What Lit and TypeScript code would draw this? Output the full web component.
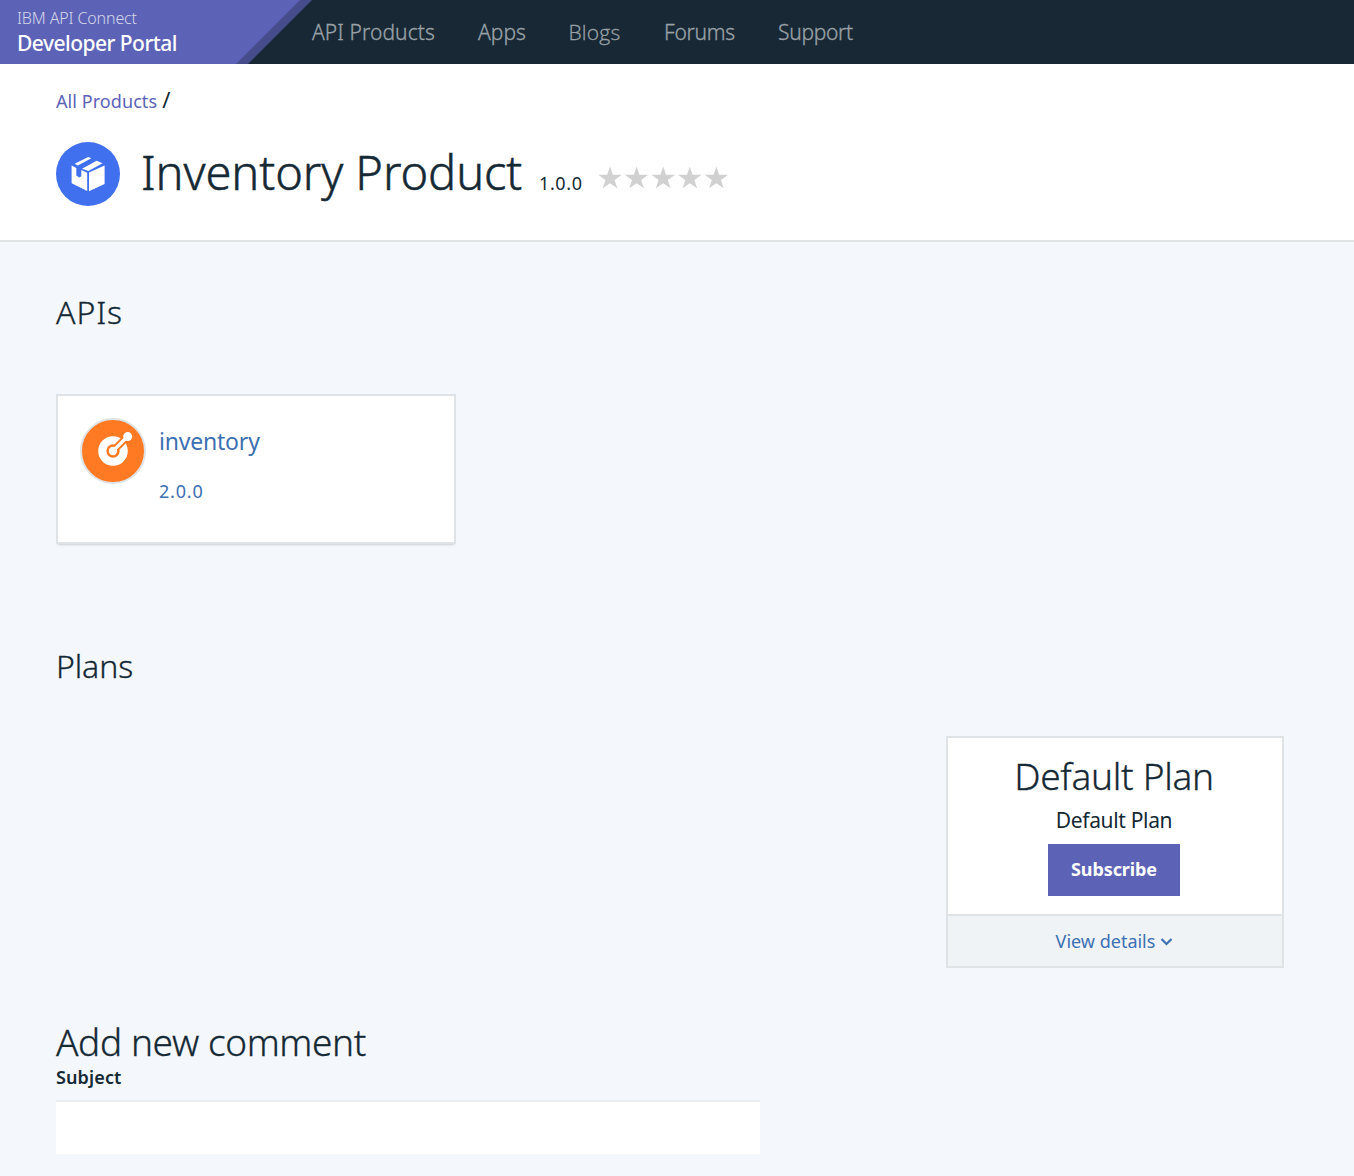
import { LitElement, html, css, svg } from "lit";
import { customElement } from "lit/decorators.js";

const NAV = [
  { label: "API Products", cls: "products" },
  { label: "Apps", cls: "apps" },
  { label: "Blogs", cls: "blogs" },
  { label: "Forums", cls: "forums" },
  { label: "Support", cls: "support" },
];

@customElement("portal-header")
class PortalHeader extends LitElement {
  static styles = css`
    :host { display: block; }
    .bar {
      display: grid; grid-template-columns: 312px 1fr; height: 64px;
      background: #182935; font-family: "Noto Sans", sans-serif;
    }
    .edge { background: #474d8c; clip-path: polygon(0 0, 312px 0, 248px 64px, 0 64px); }
    .brand {
      box-sizing: border-box; height: 64px; padding: 7px 0 0 17px; color: #fff;
      background: #5c63b6; clip-path: polygon(0 0, 300px 0, 236px 64px, 0 64px);
      white-space: nowrap;
    }
    .vendor { font-size: 16px; line-height: 22px; font-weight: 300; letter-spacing: -0.13px; color: #d4d6ec; }
    .name { font-size: 21px; line-height: 28px; font-weight: 500; letter-spacing: -0.52px; }
    .nav {
      display: flex; color: #9aa2a8; font-size: 21px; line-height: 65px; font-weight: 300; white-space: nowrap;
      -webkit-text-stroke: 0.3px #9aa2a8;
    }
    .item { flex: none; }
    .products { width: 166px; letter-spacing: 0.1px; }
    .apps { width: 90.5px; letter-spacing: 0.05px; }
    .blogs { width: 95.5px; font-family: "Open Sans", sans-serif; letter-spacing: 0.2px; }
    .forums { width: 114px; letter-spacing: -0.25px; }
    .support { letter-spacing: -0.3px; }
  `;
  render() {
    return html`<div class="bar">
      <div class="edge"><div class="brand">
        <div class="vendor">IBM API Connect</div>
        <div class="name">Developer Portal</div>
      </div></div>
      <nav class="nav">${NAV.map((n) => html`<span class="item ${n.cls}">${n.label}</span>`)}</nav>
    </div>`;
  }
}

@customElement("product-banner")
class ProductBanner extends LitElement {
  static styles = css`
    :host { display: block; }
    .banner {
      box-sizing: border-box; height: 178px; padding: 24px 56px 0; background: #fff;
      border-bottom: 2px solid #dfe3e6; color: #152935; font-family: "Noto Sans", sans-serif;
    }
    .crumbs { display: flex; gap: 5px; height: 26px; line-height: 26px; }
    .link { color: #5c63b6; font-size: 18px; letter-spacing: 0.07px; }
    .slash { font-size: 22px; line-height: 23px; }
    .row { display: flex; align-items: flex-start; margin-top: 28px; white-space: nowrap; }
    .title {
      margin: 0 0 0 21px; width: 398px; font-size: 47px; line-height: 60px; font-weight: 300;
      letter-spacing: -0.08px; -webkit-text-stroke: 0.5px #152935;
    }
    .version { width: 59px; padding-top: 21px; font-size: 18px; line-height: 40px; letter-spacing: 0.6px; }
    .stars { margin-top: 24px; }
    svg { display: block; }
  `;
  render() {
    return html`<div class="banner">
      <div class="crumbs"><span class="link">All Products</span><span class="slash">/</span></div>
      <div class="row">
        <svg width="64" height="64" viewBox="0 0 64 64">
          <circle cx="32" cy="32" r="32" fill="#4070ed" />
          <path fill="#fff" d="M18.6 21.8 32.2 15l3.2 1.3-13.6 7.3zM26 26.8l14.6-8 6 2.4-14.2 7.7zM15.6 23.6l4.7 2.3v7.7l3 1.9 2-1.3v-6.1l5.9 2.7v18.3l-15.6-7.8zM33 30.5l15.6-6.9V42L33 49.3z" />
        </svg>
        <h1 class="title">Inventory Product</h1>
        <span class="version">1.0.0</span>
        <svg class="stars" width="132" height="24" viewBox="0 0 132 24">
          ${[0, 1, 2, 3, 4].map((i) => svg`<path fill="#d1d1d1" transform="translate(${i * 26.6} 0)"
            d="M12 .5l2.8 8.2h9l-7.2 5.3 2.7 8.2-7.3-5-7.3 5L7.4 14 .2 8.7h9z" />`)}
        </svg>
      </div>
    </div>`;
  }
}

@customElement("api-card")
class ApiCard extends LitElement {
  static styles = css`
    :host { display: block; }
    .card {
      box-sizing: border-box; display: flex; gap: 13px; width: 400px; height: 150px; padding: 22px;
      background: #fff; border: 2px solid #dfe3e6; box-shadow: 0 3px 2px -2px rgba(0, 0, 0, 0.16);
      color: #3d70b2; font-family: "Noto Sans", sans-serif;
    }
    svg { display: block; flex: none; }
    .text { padding-top: 8px; }
    .name { font-size: 23px; line-height: 30px; letter-spacing: -0.2px; }
    .version { margin-top: 22px; font-size: 18px; line-height: 26px; letter-spacing: 0.8px; }
  `;
  render() {
    return html`<div class="card">
      <svg width="66" height="66" viewBox="0 0 66 66">
        <circle cx="33" cy="33" r="32" fill="#ff7a23" stroke="#dfe3e6" stroke-width="2" />
        <circle cx="33" cy="33" r="14.8" fill="#fff" />
        <path d="M33 33 49 17" stroke="#ff7a23" stroke-width="7.4" />
        <circle cx="33" cy="33" r="6.7" fill="#ff7a23" />
        <path d="M33 33 47 19" stroke="#fff" stroke-width="3.2" />
        <circle cx="33" cy="33" r="4.2" fill="#fff" />
        <circle cx="47.7" cy="18.6" r="4.5" fill="#fff" />
      </svg>
      <div class="text"><div class="name">inventory</div><div class="version">2.0.0</div></div>
    </div>`;
  }
}

@customElement("plan-card")
class PlanCard extends LitElement {
  static styles = css`
    :host { display: block; }
    .card {
      box-sizing: border-box; width: 338px; height: 232px; background: #fff; border: 2px solid #dfe3e6;
      color: #152935; font-family: "Noto Sans", sans-serif; white-space: nowrap;
    }
    .body {
      box-sizing: border-box; height: 178px; padding: 13px 2px 0 0; display: flex; flex-direction: column;
      align-items: center; border-bottom: 2px solid #dfe3e6;
    }
    .title {
      font-size: 37px; line-height: 50px; font-weight: 300; letter-spacing: -0.3px;
      -webkit-text-stroke: 0.3px #152935;
    }
    .about { margin-top: 4px; font-size: 21px; line-height: 30px; letter-spacing: -0.33px; }
    .button {
      margin-top: 9px; width: 132px; height: 52px; border: 0; padding: 0 0 2px; background: #5c63b6; color: #fff;
      font: 700 18px/50px "Noto Sans", sans-serif; letter-spacing: -0.11px;
    }
    .more {
      height: 50px; padding-right: 1px; display: flex; justify-content: center; align-items: center; gap: 5px;
      background: #eff3f6; color: #3d70b2; font-size: 18px; line-height: 50px;
    }
    svg { display: block; margin-top: 2px; }
  `;
  render() {
    return html`<div class="card">
      <div class="body">
        <div class="title">Default Plan</div>
        <div class="about">Default Plan</div>
        <button class="button">Subscribe</button>
      </div>
      <div class="more"><span>View details</span>
        <svg width="13" height="10" viewBox="0 0 13 10"><path d="M1.5 2 6.5 7l5-5" fill="none" stroke="#3d70b2" stroke-width="2.2" /></svg>
      </div>
    </div>`;
  }
}

@customElement("app-root")
class AppRoot extends LitElement {
  static styles = css`
    :host { display: block; }
    .page {
      height: 1176px; overflow: hidden; background: #f4f7fb; color: #152935;
      font-family: "Noto Sans", sans-serif;
    }
    .content { padding: 50px 70px 0 56px; display: flex; flex-direction: column; }
    .heading {
      margin: 0; font-size: 32px; line-height: 40px; font-weight: 300;
      -webkit-text-stroke: 0.3px #152935;
    }
    .apis { letter-spacing: 0.95px; }
    .api { margin-top: 62px; }
    .plans { margin-top: 102px; letter-spacing: -0.1px; }
    .plan { margin-top: 50px; align-self: flex-end; }
    .comment {
      margin: 51px 0 0; font-size: 37px; line-height: 46px; font-weight: 300; letter-spacing: -0.38px;
      -webkit-text-stroke: 0.3px #152935;
    }
    .label { font-size: 18px; line-height: 24px; font-weight: 600; letter-spacing: 0.12px; }
    .field {
      box-sizing: border-box; margin-top: 11px; width: 704px; height: 54px; padding: 0 16px;
      background: #fff; border: 0; border-top: 2px solid #eceff2; font: inherit;
    }
  `;
  render() {
    return html`<div class="page">
      <portal-header></portal-header>
      <product-banner></product-banner>
      <main class="content">
        <h2 class="heading apis">APIs</h2>
        <api-card class="api"></api-card>
        <h2 class="heading plans">Plans</h2>
        <plan-card class="plan"></plan-card>
        <h2 class="comment">Add new comment</h2>
        <label class="label" for="subject">Subject</label>
        <input class="field" id="subject" type="text" />
      </main>
    </div>`;
  }
}
